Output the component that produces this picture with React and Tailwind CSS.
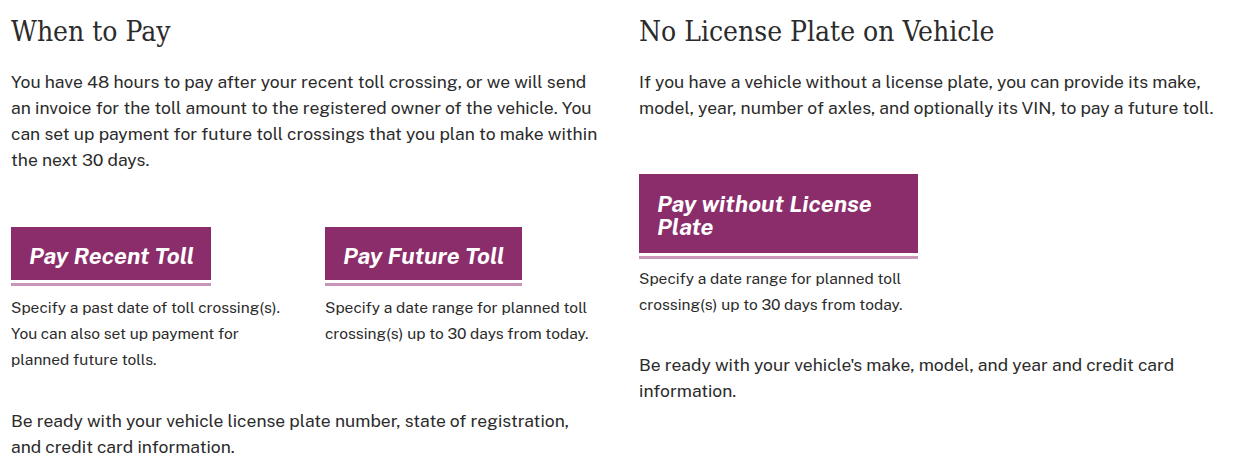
const body = { fontFamily: '"Public Sans", Roboto, "Liberation Sans", sans-serif' };
const head = { fontFamily: '"Roboto Slab", "DejaVu Serif Condensed", "DejaVu Serif", serif' };

function PayButton({ children, className = "" }) {
  return (
    <div className={`border-b-[3px] border-[#c995b9] pb-[3px] ${className}`}>
      <div className="bg-[#8c2d6b] px-[18px] text-white italic font-bold text-[23px] leading-[23px] whitespace-nowrap">
        {children}
      </div>
    </div>
  );
}

export default function App() {
  return (
    <div className="bg-white text-[#2b2b2b] w-[1235px] h-[463px] overflow-hidden" style={body}>
      <div className="flex gap-[29px] pl-[11px] pt-[14px]">
        {/* Left column */}
        <div className="w-[599px]">
          <h2 className="text-[28px] leading-[36px]" style={head}>When to Pay</h2>
          <p className="mt-[19px] text-[17.5px] leading-[26px]">
            You have 48 hours to pay after your recent toll crossing, or we will send an invoice for
            the toll amount to the registered owner of the vehicle. You can set up payment for future
            toll crossings that you plan to make within the next 30 days.
          </p>
          <div className="flex gap-[14px] mt-[54px]">
            <div className="w-[300px]">
              <PayButton className="w-[200px]">
                <div className="pt-[17px] pb-[13px]">Pay Recent Toll</div>
              </PayButton>
              <p className="mt-[8px] text-[15.5px] leading-[26px] w-[275px]">
                Specify a past date of toll crossing(s). You can also set up payment for planned future tolls.
              </p>
            </div>
            <div className="w-[285px]">
              <PayButton className="w-[197px]">
                <div className="pt-[17px] pb-[13px]">Pay Future Toll</div>
              </PayButton>
              <p className="mt-[8px] text-[15.5px] leading-[26px]">
                Specify a date range for planned toll crossing(s) up to 30 days from today.
              </p>
            </div>
          </div>
          <p className="mt-[36px] text-[17.5px] leading-[26px] w-[580px]">
            Be ready with your vehicle license plate number, state of registration, and credit card information.
          </p>
        </div>

        {/* Right column */}
        <div className="w-[590px]">
          <h2 className="text-[28px] leading-[36px]" style={head}>No License Plate on Vehicle</h2>
          <p className="mt-[19px] text-[17.5px] leading-[26px]">
            If you have a vehicle without a license plate, you can provide its make, model, year,
            number of axles, and optionally its VIN, to pay a future toll.
          </p>
          <PayButton className="w-[279px] mt-[53px]">
            <div className="pt-[18px] pb-[15px]">Pay without License<br />Plate</div>
          </PayButton>
          <p className="mt-[6px] text-[15.5px] leading-[26px] w-[280px]">
            Specify a date range for planned toll crossing(s) up to 30 days from today.
          </p>
          <p className="mt-[35px] text-[17.5px] leading-[26px] w-[560px]">
            Be ready with your vehicle's make, model, and year and credit card information.
          </p>
        </div>
      </div>
    </div>
  );
}
